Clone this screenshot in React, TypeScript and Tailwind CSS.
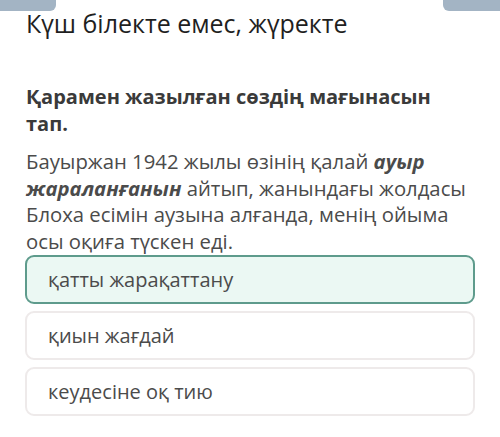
import React from "react";

export default function App() {
  const font = { fontFamily: '"Open Sans", "Noto Sans", sans-serif' };
  return (
    <div className="w-[500px] h-[437px] bg-white relative overflow-hidden" style={font}>
      <div className="absolute left-0 top-0 w-[56px] h-[11px] bg-[#a3b4c4] rounded-br-[6px]" />
      <div className="absolute right-0 top-0 w-[57px] h-[11px] bg-[#a3b4c4] rounded-bl-[6px]" />
      <div className="px-[25px] pt-[8px]">
        <h1 className="pl-[1px] text-[25px] leading-[30px] text-[#1f1f1f]">Күш білекте емес, жүректе</h1>
        <h2 className="mt-[45px] pl-[1px] text-[20px] leading-[27px] font-bold text-[#3a3a3a]">
          Қарамен жазылған сөздің мағынасын тап.
        </h2>
        <p className="mt-[11px] pl-[1px] text-[20.3px] leading-[26.5px] text-[#4b4b4b]">
          Бауыржан 1942 жылы өзінің қалай <b className="italic">ауыр жараланғанын</b> айтып, жанындағы жолдасы Блоха есімін аузына алғанда, менің ойыма осы оқиға түскен еді.
        </p>
        <div className="mt-[1px] flex flex-col gap-[7px]">
          <div className="h-[49px] rounded-[9px] border-2 border-[#5e9b8c] bg-[#ebf8f3] flex items-center pl-[21px] text-[20px] text-[#4b4b4b]">
            қатты жарақаттану
          </div>
          <div className="h-[49px] rounded-[9px] border-2 border-[#eeeaea] bg-white flex items-center pl-[21px] text-[20px] text-[#4b4b4b]">
            қиын жағдай
          </div>
          <div className="h-[49px] rounded-[9px] border-2 border-[#eeeaea] bg-white flex items-center pl-[21px] text-[20px] text-[#4b4b4b]">
            кеудесіне оқ тию
          </div>
        </div>
      </div>
    </div>
  );
}
